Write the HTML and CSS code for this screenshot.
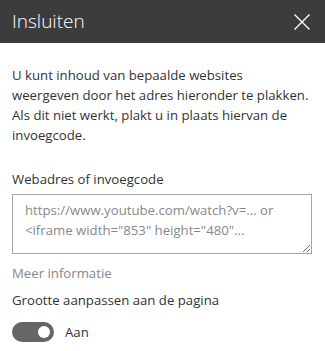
FILE: index.html
```html
<!DOCTYPE html>
<html lang="nl">
<head>
  <meta charset="UTF-8" />
  <meta name="viewport" content="width=device-width, initial-scale=1.0"/>
  <title>Insluiten</title>
  <link rel="stylesheet" href="styles.css">
</head>
<body>

  <div class="panel">
    <div class="panel-header">
      <h2>Insluiten</h2>
      <button class="close-btn" aria-label="Sluiten">
        <svg width="16" height="16" viewBox="0 0 16 16">
          <path d="M0.5 0.5 L15.5 15.5 M15.5 0.5 L0.5 15.5" stroke="#fff" stroke-width="1.4" fill="none"/>
        </svg>
      </button>
    </div>

    <div class="panel-body">
      <p class="intro">U kunt inhoud van bepaalde websites weergeven door het adres hieronder te plakken. Als dit niet werkt, plakt u in plaats hiervan de invoegcode.</p>

      <label class="field-label" for="embedCode">Webadres of invoegcode</label>
      <textarea id="embedCode" placeholder="https://www.youtube.com/watch?v=... or <iframe width=&quot;853&quot; height=&quot;480&quot;..."></textarea>

      <a class="more-info">Meer informatie</a>

      <div class="field-label toggle-label">Grootte aanpassen aan de pagina</div>
      <div class="toggle-row">
        <span class="toggle"><span class="knob"></span></span>
        <span class="toggle-text">Aan</span>
      </div>
    </div>
  </div>

</body>
</html>
```

FILE: styles.css
```css
* { margin: 0; padding: 0; box-sizing: border-box; }
body {
  font-family: 'Open Sans', 'Noto Sans', sans-serif;
  background: #fff;
  color: #333;
  width: 325px;
}
.panel-header {
  display: flex;
  justify-content: space-between;
  align-items: center;
  height: 43px;
  padding: 0 15px 0 12px;
  background: #3c3c3c;
}
.panel-header h2 {
  font-weight: 300;
  font-size: 19px;
  color: #fff;
  margin-top: -2px;
}
.close-btn {
  background: none;
  border: none;
  display: flex;
  margin-top: 1px;
}
.panel-body {
  padding: 22px 12px;
}
.intro {
  font-size: 13.2px;
  line-height: 20px;
  margin-bottom: 24px;
}
.field-label {
  display: block;
  font-size: 13.2px;
  line-height: 20px;
  color: #333;
}
textarea {
  display: block;
  width: 300px;
  height: 60px;
  margin-top: 5px;
  padding: 5px 12px;
  border: 1px solid #a6a6a6;
  font-family: inherit;
  font-size: 13.2px;
  line-height: 20px;
  color: #333;
}
textarea::placeholder { color: #888; }
.more-info {
  display: block;
  margin-top: 9px;
  font-size: 13.2px;
  line-height: 20px;
  color: #888;
}
.toggle-label { margin-top: 7px; }
.toggle-row {
  display: flex;
  align-items: center;
  margin-top: 12px;
}
.toggle {
  display: flex;
  justify-content: flex-end;
  align-items: center;
  width: 42px;
  height: 20px;
  padding: 0 4px;
  border-radius: 10px;
  background: #666;
}
.knob {
  width: 12px;
  height: 12px;
  border-radius: 50%;
  background: #fff;
}
.toggle-text {
  margin-left: 11px;
  font-size: 13.2px;
}
```
